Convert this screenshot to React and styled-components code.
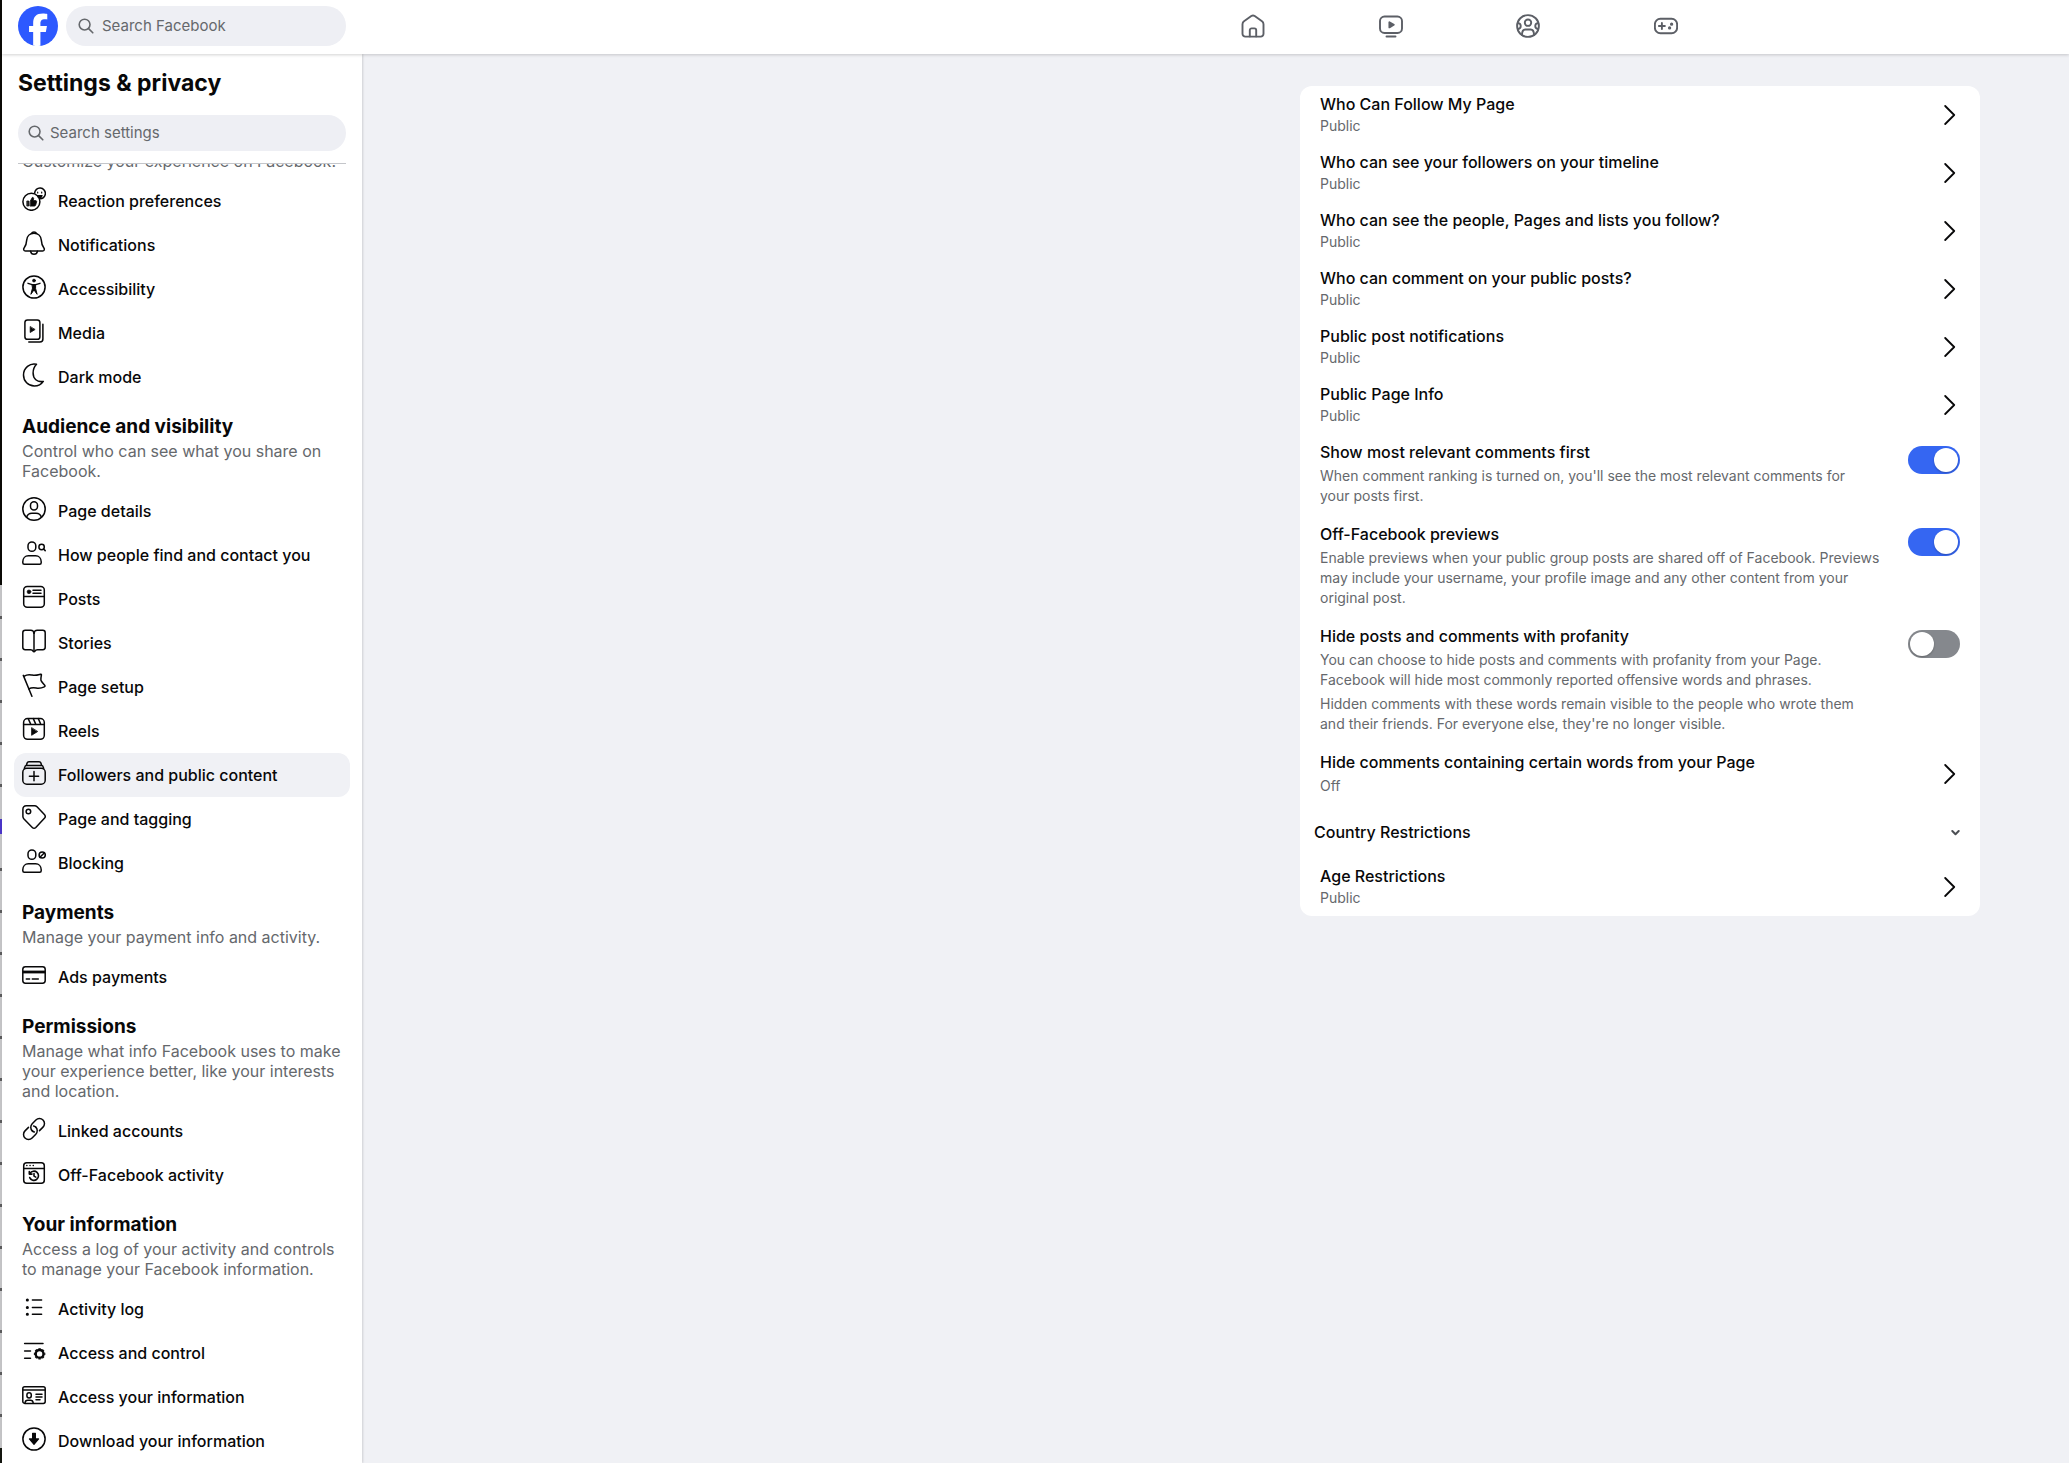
import React, { useLayoutEffect, useRef } from 'react'
import styled, { createGlobalStyle } from 'styled-components'

const GlobalStyle = createGlobalStyle`
  * {
    box-sizing: border-box;
  }

  body {
    margin: 0;
    background-color: #f0f1f5;
    color: #080809;
    font-family: Inter, 'Liberation Sans', sans-serif;
  }
`;

const Shell = styled.div`
  display: grid;
  grid-template-columns: 2px 1fr;
  height: 100vh;
  overflow: hidden;
`;

// edge of the window that sits behind the browser
const WindowEdge = styled.div`
  background:
    linear-gradient(#0b0a06 0 40%, transparent 40% 99%, #14160f 99%),
    linear-gradient(transparent 0 56%, #4a35c8 56% 57%, transparent 57%),
    repeating-linear-gradient(transparent 0 28px, #5a5a5c 28px 31px, transparent 31px 42px),
    #c4c4c6;
`;

const Page = styled.div`
  display: grid;
  grid-template-rows: 54px 1fr;
  min-height: 0;
`;

const TopBar = styled.header`
  display: flex;
  align-items: center;
  padding: 0 16px 2px;
  background-color: #ffffff;
  box-shadow: 0 1px 3px rgba(0, 0, 0, 0.18);
  z-index: 2;
`;

const LogoLink = styled.a`
  display: block;
  width: 40px;
  height: 40px;
  margin-right: 8px;
`;

const SearchBox = styled.label`
  display: flex;
  align-items: center;
  gap: ${props => (props.$small ? '6px' : '8px')};
  width: ${props => (props.$small ? 'auto' : '280px')};
  height: ${props => (props.$small ? '36px' : '40px')};
  padding: 0 ${props => (props.$small ? '10px' : '12px')};
  border-radius: 20px;
  background-color: #eeeff4;
  color: #65686c;

  svg {
    flex: none;
  }
`;

const SearchInput = styled.input`
  flex: 1;
  min-width: 0;
  padding: 0;
  border: 0;
  outline: 0;
  background: transparent;
  font-family: inherit;
  font-size: 15px;
  line-height: 20px;
  color: #080809;

  &::placeholder {
    color: #65686c;
    opacity: 1;
  }
`;

const TopNav = styled.nav`
  display: flex;
  width: 551px;
  margin-left: auto;
  margin-right: 318px;
`;

const TopNavLink = styled.a`
  flex: 1;
  display: flex;
  justify-content: center;
  color: #5c5f66;
`;

const Body = styled.div`
  display: grid;
  grid-template-columns: 360px 1fr;
  min-height: 0;
`;

const Sidebar = styled.aside`
  display: flex;
  flex-direction: column;
  min-height: 0;
  background-color: #ffffff;
  box-shadow: 1px 0 2px rgba(0, 0, 0, 0.14);
`;

const SidebarHead = styled.div`
  margin: 0 16px;
  padding: 15px 0 12px;
  border-bottom: 1px solid #c4c6ca;
`;

const SidebarTitle = styled.h1`
  margin: 0 0 18px;
  font-size: 23px;
  font-weight: 700;
  line-height: 28px;
`;

const Scroller = styled.nav`
  flex: 1;
  min-height: 0;
  padding: 0 12px;
  overflow-y: auto;
  scrollbar-width: none;
`;

const SectionHead = styled.div`
  padding: 16px 8px 8px;
`;

const SectionTitle = styled.h2`
  margin: 0 0 2px;
  font-size: 19px;
  font-weight: 700;
  line-height: 24px;
`;

const SectionText = styled.p`
  margin: 0;
  font-size: 16px;
  line-height: 20px;
  color: #65686c;
`;

const NavList = styled.ul`
  margin: 0;
  padding: 0;
  list-style: none;
`;

const NavItem = styled.a`
  display: flex;
  align-items: center;
  gap: 12px;
  height: 44px;
  padding: 0 8px;
  border-radius: 12px;
  background-color: ${props => (props.$active ? '#f0f1f5' : 'transparent')};
  color: #080809;
  font-size: 16px;
  font-weight: 500;
  line-height: 20px;
  text-decoration: none;

  svg {
    flex: none;
    margin-bottom: 4px;
  }
`;

const Main = styled.main`
  display: flex;
  justify-content: flex-end;
  align-items: flex-start;
  padding: 32px 89px 32px 16px;
  overflow-y: auto;
`;

const Card = styled.section`
  width: 100%;
  max-width: 680px;
  border-radius: 12px;
  background-color: #ffffff;
`;

const Row = styled.button`
  display: flex;
  align-items: center;
  justify-content: space-between;
  width: 100%;
  padding: ${props => (props.$roomy ? '8px 20px 10px' : '8px 20px')};
  border: 0;
  background: transparent;
  color: #080809;
  font-family: inherit;
  text-align: left;
  cursor: pointer;
`;

const RowText = styled.span`
  display: flex;
  flex-direction: column;
  gap: ${props => (props.$roomy ? '4px' : '2px')};
`;

const RowTitle = styled.span`
  font-size: 16px;
  font-weight: 500;
  line-height: 20px;
`;

const RowNote = styled.span`
  font-size: 14px;
  line-height: 20px;
  color: #65686c;
`;

const SwitchRow = styled.label`
  display: flex;
  align-items: flex-start;
  justify-content: space-between;
  gap: 12px;
  padding: 8px 20px 10px;
  cursor: pointer;
`;

const Switch = styled.input`
  appearance: none;
  flex: none;
  display: flex;
  align-items: center;
  width: 52px;
  height: 28px;
  margin: 4px 0 0;
  padding: 0 2px;
  border-radius: 14px;
  background-color: #85888d;
  cursor: pointer;

  &::before {
    content: '';
    width: 24px;
    height: 24px;
    border-radius: 50%;
    background-color: #ffffff;
    box-shadow: 0 1px 2px rgba(0, 0, 0, 0.25);
  }

  &:checked {
    justify-content: flex-end;
    background-color: #3566f2;
  }
`;

const Disclosure = styled.button`
  display: flex;
  align-items: center;
  justify-content: space-between;
  width: 100%;
  height: 52px;
  padding: 0 20px 0 14px;
  border: 0;
  background: transparent;
  color: #080809;
  font-family: inherit;
  cursor: pointer;
`;

const Icon = ({ size = 24, width = 1.5, children }) => (
  <svg
    width={size}
    height={size}
    viewBox="0 0 24 24"
    fill="none"
    stroke="currentColor"
    strokeWidth={width}
    strokeLinecap="round"
    strokeLinejoin="round"
    aria-hidden="true"
  >
    {children}
  </svg>
);

const SearchIcon = () => (
  <svg width="16" height="16" viewBox="0 0 16 16" fill="none" stroke="currentColor" strokeWidth="1.6" strokeLinecap="round" aria-hidden="true">
    <circle cx="6.6" cy="6.6" r="5.4" />
    <path d="M10.6 10.6 14.8 14.8" />
  </svg>
);

const Logo = () => (
  <svg width="40" height="40" viewBox="0 0 36 36" aria-hidden="true">
    <circle cx="18" cy="18" r="18" fill="#2d59ff" />
    <path
      fill="#ffffff"
      d="M13.651 35.471v-11.97H9.936V18h3.715v-2.37c0-6.127 2.772-8.964 8.784-8.964 1.138 0 3.103.223 3.91.446v4.983c-.425-.043-1.167-.065-2.081-.065-2.952 0-4.09 1.116-4.09 4.025V18h5.883l-1.008 5.5h-4.867v12.37a18.183 18.183 0 0 1-6.53-.399Z"
    />
  </svg>
);

const ChevronRight = () => (
  <svg width="20" height="20" viewBox="0 0 20 20" fill="none" stroke="currentColor" strokeWidth="1.8" strokeLinecap="round" strokeLinejoin="round" aria-hidden="true">
    <path d="M5.2 1 14.2 10 5.2 19" />
  </svg>
);

const ChevronDown = () => (
  <svg width="9" height="9" viewBox="0 0 9 9" fill="none" stroke="#4b4e53" strokeWidth="2" strokeLinecap="round" strokeLinejoin="round" aria-hidden="true">
    <path d="M1.3 3 4.5 6.2 7.7 3" />
  </svg>
);

const person = (
  <>
    <rect x="6" y=".9" width="7.8" height="9.4" rx="3.9" />
    <path d="M2.3 23.2h15.4c.9 0 1.5-.6 1.5-1.5v-.9c0-3.6-2.5-6-5.6-6H6.4c-3.2 0-5.6 2.4-5.6 6v.9c0 .9.6 1.5 1.5 1.5Z" />
  </>
);

const icons = {
  home: (
    <>
      <path d="M1.5 10.200c0-1.200.5-2.200 1.500-2.900l7.300-5.300a3 3 0 0 1 3.400 0L21 7.300c1 .7 1.500 1.700 1.500 2.900v9.600a2.800 2.800 0 0 1-2.800 2.800H4.300a2.800 2.800 0 0 1-2.800-2.800Z" />
      <path d="M8.800 22.400v-6.200c0-1 .8-1.800 1.800-1.800h2.800c1 0 1.800.8 1.800 1.800v6.200" />
    </>
  ),
  video: (
    <>
      <rect x="1" y="2.500" width="22" height="16.500" rx="4.500" />
      <path d="M10.400 8.200v5.200l4.400-2.600Z" fill="currentColor" />
      <path d="M7.500 22.500h9" />
    </>
  ),
  groups: (
    <>
      <circle cx="12" cy="12" r="10.900" />
      <circle cx="12" cy="8.700" r="3.200" />
      <path d="M6 21c0-3 .8-5.500 3.300-5.500h5.400c2.500 0 3.300 2.500 3.300 5.500" />
      <path d="M2.500 9.200a3 3 0 0 1 0 5.800M21.500 9.200a3 3 0 0 0 0 5.800" />
    </>
  ),
  games: (
    <>
      <rect x=".9" y="4.700" width="22.200" height="14.600" rx="5.500" />
      <path d="M7.900 9v6M4.900 12h6" />
      <circle cx="17.600" cy="10.200" r=".7" fill="currentColor" />
      <circle cx="15.600" cy="13.900" r=".7" fill="currentColor" />
    </>
  ),
  reaction: (
    <>
      <path d="M12.600 6.100a5.400 5.400 0 1 1 4.900 5.700" />
      <path d="M15.700 5.200v.8M19.700 5.200v.8M15.500 8.600h4.600c-.3 1.400-1.100 2.100-2.300 2.100s-2-.7-2.300-2.100Z" fill="currentColor" strokeWidth="1.200" />
      <circle cx="9.400" cy="14.800" r="8.500" />
      <path d="M5.200 14h1.600v5H5.200ZM8.300 14.100l2-3.700c.9-.2 1.500.6 1.300 1.500l-.4 1.700h2.400c.7 0 1.200.6 1 1.300l-.9 3.200c-.2.600-.7 1-1.300 1H8.300Z" fill="currentColor" strokeWidth=".8" />
    </>
  ),
  bell: (
    <>
      <path d="M12 2.300c-4.300 0-7 3-7.300 6.800-.2 3.600-.9 5.800-2.600 7.900-1 1.300-.3 2.900 1.300 2.900h17.200c1.600 0 2.300-1.600 1.300-2.900-1.700-2.100-2.400-4.300-2.600-7.900C19 5.300 16.300 2.300 12 2.300Z" />
      <path d="M9.700 2.300C10 1.300 10.800.9 12 .9s2 .4 2.300 1.400M8.600 20.300c.3 1.800 1.600 2.900 3.400 2.900s3.100-1.100 3.400-2.900" />
    </>
  ),
  access: (
    <>
      <circle cx="12" cy="12" r="11.100" />
      <circle cx="12" cy="5.600" r="1.500" fill="currentColor" strokeWidth=".6" />
      <path d="M6 8.300 10.200 9.600h3.600L18 8.300" strokeWidth="1.400" />
      <path d="M10.400 9.800h3.200v3.700l1.500 5.800L12 14.900l-3.100 4.400 1.500-5.800Z" fill="currentColor" strokeWidth="1" />
    </>
  ),
  media: (
    <>
      <rect x="2.900" y=".9" width="15" height="19.400" rx="2.600" />
      <path d="M20.900 5.200v14.900a3 3 0 0 1-3 3H6.800" />
      <path d="M8.200 7.900v5.600l4.600-2.800Z" fill="currentColor" strokeWidth=".8" />
    </>
  ),
  moon: <path d="M14.500 1.200C7.900-.4 1.500 4.900 1.500 12c0 6.200 4.700 11 10.800 11 3.900 0 7.100-1.700 9-4.600-6.400 1.200-10.200-2.800-10.200-8.400 0-3.800 1.200-6.600 3.400-8.800Z" />,
  profile: (
    <>
      <circle cx="12" cy="12" r="11.200" />
      <rect x="8.500" y="4.800" width="7" height="8.200" rx="3.500" />
      <path d="M4.600 20.200c.8-2.600 2.900-4 5.300-4h4.200c2.400 0 4.500 1.400 5.300 4" />
    </>
  ),
  find: (
    <>
      {person}
      <circle cx="19.600" cy="6" r="2.700" />
      <path d="M21.600 8 23.200 9.600" />
    </>
  ),
  posts: (
    <>
      <rect x="1.700" y="1.600" width="20.600" height="20.700" rx="3.500" />
      <path d="M1.700 11.500h20.600M11 5.300h8M11 8.300h8" />
      <circle cx="7" cy="6.800" r="1.900" fill="currentColor" strokeWidth=".6" />
    </>
  ),
  book: (
    <>
      <path d="M12 4.300c-.2-1.900-1.200-3-3.200-3H3.200c-1.500 0-2.400.9-2.400 2.400v14.600c0 1.500.9 2.400 2.400 2.400h5.300c1.500 0 2.200.5 2.600 1.400.3.700 1.500.7 1.800 0 .4-.9 1.100-1.400 2.600-1.400h5.300c1.500 0 2.400-.9 2.400-2.400V3.700c0-1.500-.9-2.400-2.400-2.400h-5.600c-2 0-3 1.100-3.200 3Z" />
      <path d="M12 4.300v17.400" />
    </>
  ),
  flag: (
    <>
      <path d="M1.300 2.400 9.900 23.300" />
      <path d="M2.300 3.200C5.500 1 7.600 1.700 10.200 2.100c3.500.7 5.800-.2 8.300-.9.700-.2 1 .3.900.9-.5 2.900-.8 4.300-.3 5.500.6 1.400 2.200 3.100 3.700 4.800.5.600.1 1.100-.5 1.400-3.300 1.600-5.200 1.700-8.200 1.100-2.600-.5-4.600-.7-7.300 1" />
    </>
  ),
  reels: (
    <>
      <rect x="1.600" y="1.600" width="20.700" height="20.700" rx="4" />
      <path d="M1.600 7.500h20.700M6.300 1.900l2.600 5.600M11.300 1.600l2.600 5.900M16.300 1.600l2.600 5.900" />
      <path d="M9.600 11v7.300l5.800-3.600Z" fill="currentColor" strokeWidth=".8" />
    </>
  ),
  followers: (
    <>
      <rect x=".8" y="7.300" width="22.400" height="15.900" rx="4" />
      <path d="M2.300 7.400 3 5.400c.2-.7.600-1 1.300-1h15.400c.7 0 1.100.3 1.300 1l.7 2M4.400 4.200l.7-2.100C5.400 1.200 6 .8 6.900.8h10.200c.9 0 1.500.4 1.800 1.300l.7 2.100M12 10.600v9.200M7.400 15.200h9.200" />
    </>
  ),
  tag: (
    <>
      <path d="M.9 4.200c0-2 1.300-3.400 3.300-3.400h8.400c.9 0 1.700.3 2.400 1l7.400 7.800c1 1.100 1 2.700 0 3.700l-8.600 9.200c-1 1-2.500 1-3.500 0L2 14c-.7-.8-1.100-1.600-1.100-2.600Z" />
      <circle cx="6.400" cy="6.500" r="2.300" />
    </>
  ),
  block: (
    <>
      {person}
      <circle cx="20.200" cy="6" r="3.100" />
      <path d="m18.200 8 4-4" />
    </>
  ),
  card: (
    <>
      <rect x=".8" y="3.700" width="22.400" height="16.500" rx="2.600" />
      <path d="M.8 9h22.400" strokeWidth="2.800" strokeLinecap="butt" />
      <path d="M4.300 16h3.300M10.300 16h6" />
    </>
  ),
  link: (
    <>
      <path d="M10.300 13.900a5 5 0 0 1-.1-7.100l3.700-3.800a5 5 0 0 1 7.100 7.100l-3.500 3.500" />
      <path d="M13.700 10.100a5 5 0 0 1 .1 7.100l-3.700 3.800A5 5 0 0 1 3 13.900l3.500-3.500" />
      <path d="M10.300 13.900c.6.600 1.300 1 2.100 1.100M13.700 10.100c-.6-.6-1.300-1-2.100-1.100" />
    </>
  ),
  history: (
    <>
      <rect x="1.700" y="1.700" width="20.600" height="20.600" rx="3" />
      <path d="M1.700 7.400h20.600" />
      <path d="M4.800 4.600h.1M8 4.600h.1M11.200 4.600h.1" />
      <path d="M8 12.300a4.600 4.600 0 1 1-.3 4.300M7.300 10.500v2.600h2.700M12 12.600v2.500l1.800 1" strokeWidth="1.600" />
    </>
  ),
  list: (
    <>
      <path d="M10.400 5h9.200M10.400 12.400h9.200M10.400 19.200h9.200" />
      <path d="M5.300 5h.1M5.300 12.400h.1M5.300 19.200h.1" strokeWidth="3" />
    </>
  ),
  control: (
    <>
      <path d="M2.600 4.600h18.400M2.600 12h5.900M2.600 19.200h5.900" />
      <circle cx="17.600" cy="14.900" r="3.900" strokeWidth="2.400" />
      <path
        d="M17.600 9.200v1M17.600 19.600v1M11.900 14.900h1M22.300 14.900h1M13.600 10.900l.7.700M20.900 18.200l.7.700M13.600 18.900l.7-.7M20.900 11.600l.7-.7"
        strokeWidth="2.400"
        strokeLinecap="butt"
      />
    </>
  ),
  idCard: (
    <>
      <rect x=".8" y="3.700" width="22.400" height="16.700" rx="1.900" />
      <path d="M.8 7h22.400M14 11.200h6M14 14h6M14 16.800h4" />
      <rect x="4.900" y="9.700" width="4.400" height="5.200" rx="2.200" />
      <path d="M3 20c.2-2 1.300-2.700 2.700-2.700h2.800c1.400 0 2.500.7 2.700 2.700" />
    </>
  ),
  download: (
    <>
      <circle cx="12" cy="12" r="11.100" />
      <path d="M10.600 6.400h2.800v5.500h3.200L12 17.300 7.400 11.900h3.200Z" fill="currentColor" strokeWidth="1.200" />
    </>
  )
};

const topLinks = [
  ['Home', 'home'],
  ['Video', 'video'],
  ['Groups', 'groups'],
  ['Gaming', 'games']
];

const sections = [
  {
    text: 'Customize your experience on Facebook.',
    items: [
      ['Reaction preferences', 'reaction'],
      ['Notifications', 'bell'],
      ['Accessibility', 'access'],
      ['Media', 'media'],
      ['Dark mode', 'moon']
    ]
  },
  {
    title: 'Audience and visibility',
    text: 'Control who can see what you share on Facebook.',
    items: [
      ['Page details', 'profile'],
      ['How people find and contact you', 'find'],
      ['Posts', 'posts'],
      ['Stories', 'book'],
      ['Page setup', 'flag'],
      ['Reels', 'reels'],
      ['Followers and public content', 'followers'],
      ['Page and tagging', 'tag'],
      ['Blocking', 'block']
    ]
  },
  {
    title: 'Payments',
    text: 'Manage your payment info and activity.',
    items: [['Ads payments', 'card']]
  },
  {
    title: 'Permissions',
    text: 'Manage what info Facebook uses to make your experience better, like your interests and location.',
    items: [
      ['Linked accounts', 'link'],
      ['Off-Facebook activity', 'history']
    ]
  },
  {
    title: 'Your information',
    text: 'Access a log of your activity and controls to manage your Facebook information.',
    items: [
      ['Activity log', 'list'],
      ['Access and control', 'control'],
      ['Access your information', 'idCard'],
      ['Download your information', 'download']
    ]
  }
];

const audienceRows = [
  'Who Can Follow My Page',
  'Who can see your followers on your timeline',
  'Who can see the people, Pages and lists you follow?',
  'Who can comment on your public posts?',
  'Public post notifications',
  'Public Page Info'
];

const switches = [
  {
    title: 'Show most relevant comments first',
    notes: ["When comment ranking is turned on, you'll see the most relevant comments for your\u00a0posts first."],
    on: true
  },
  {
    title: 'Off-Facebook previews',
    notes: ['Enable previews when your public group posts are shared off of Facebook. Previews may include your username, your profile image and any other content from your original post.'],
    on: true
  },
  {
    title: 'Hide posts and comments with profanity',
    notes: [
      'You can choose to hide posts and comments with profanity from your Page. Facebook\u00a0will hide most commonly reported offensive words and phrases.',
      "Hidden comments with these words remain visible to the people who wrote them and\u00a0their friends. For everyone else, they're no longer visible."
    ],
    on: false
  }
];

function SettingRow({ title, value, roomy }) {
  return (
    <Row type="button" $roomy={roomy}>
      <RowText $roomy={roomy}>
        <RowTitle>{title}</RowTitle>
        <RowNote>{value}</RowNote>
      </RowText>
      <ChevronRight />
    </Row>
  );
}

function SettingSwitch({ title, notes, on }) {
  return (
    <SwitchRow>
      <RowText $roomy>
        <RowTitle>{title}</RowTitle>
        {notes.map(note => <RowNote key={note}>{note}</RowNote>)}
      </RowText>
      <Switch type="checkbox" role="switch" defaultChecked={on} />
    </SwitchRow>
  );
}

function SettingsNav() {
  const scroller = useRef(null);

  // open at the end of the list
  useLayoutEffect(() => {
    scroller.current.scrollTop = scroller.current.scrollHeight;
  }, []);

  return (
    <Scroller ref={scroller} aria-label="Settings">
      {sections.map(section => (
        <div key={section.text}>
          <SectionHead>
            {section.title && <SectionTitle>{section.title}</SectionTitle>}
            <SectionText>{section.text}</SectionText>
          </SectionHead>
          <NavList>
            {section.items.map(([label, icon]) => (
              <li key={label}>
                <NavItem href="#" $active={icon === 'followers'}>
                  <Icon>{icons[icon]}</Icon>
                  {label}
                </NavItem>
              </li>
            ))}
          </NavList>
        </div>
      ))}
    </Scroller>
  );
}

function App() {
  return (
    <Shell>
      <GlobalStyle />
      <WindowEdge />
      <Page>
        <TopBar>
          <LogoLink href="#" aria-label="Facebook">
            <Logo />
          </LogoLink>
          <SearchBox>
            <SearchIcon />
            <SearchInput type="text" placeholder="Search Facebook" aria-label="Search Facebook" />
          </SearchBox>
          <TopNav aria-label="Main">
            {topLinks.map(([label, icon]) => (
              <TopNavLink key={label} href="#" aria-label={label}>
                <Icon width={1.9}>{icons[icon]}</Icon>
              </TopNavLink>
            ))}
          </TopNav>
        </TopBar>
        <Body>
          <Sidebar>
            <SidebarHead>
              <SidebarTitle>Settings &amp; privacy</SidebarTitle>
              <SearchBox $small>
                <SearchIcon />
                <SearchInput type="text" placeholder="Search settings" aria-label="Search settings" />
              </SearchBox>
            </SidebarHead>
            <SettingsNav />
          </Sidebar>
          <Main>
            <Card>
              {audienceRows.map(title => <SettingRow key={title} title={title} value="Public" />)}
              {switches.map(item => <SettingSwitch key={item.title} {...item} />)}
              <SettingRow title="Hide comments containing certain words from your Page" value="Off" roomy />
              <Disclosure type="button" aria-expanded="false">
                <RowTitle>Country Restrictions</RowTitle>
                <ChevronDown />
              </Disclosure>
              <SettingRow title="Age Restrictions" value="Public" />
            </Card>
          </Main>
        </Body>
      </Page>
    </Shell>
  );
}

export default App;
